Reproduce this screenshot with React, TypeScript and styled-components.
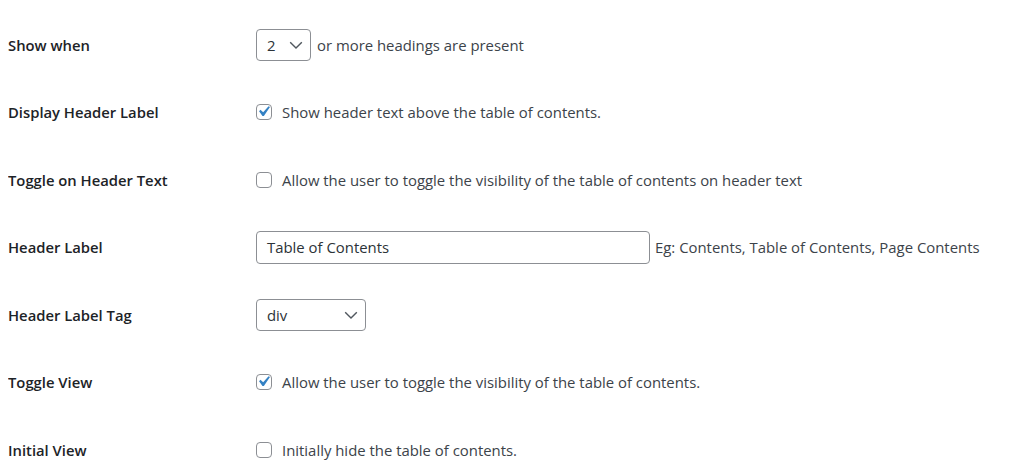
import React from "react";
import styled, { createGlobalStyle } from "styled-components";

const GlobalStyle = createGlobalStyle`
  body {
    margin: 8px;
    background: #fff;
    color: #3c434a;
    font-family: "Open Sans", "Noto Sans", "Liberation Sans", sans-serif;
    font-size: 14.9px;
  }
`;

const Table = styled.div`
  display: flex;
  flex-direction: column;
  padding-top: 3px;
`;

const Row = styled.div`
  display: grid;
  grid-template-columns: 248px 1fr;
  align-items: center;
  height: 67.5px;
`;

const Label = styled.div`
  color: #1d2327;
  font-weight: 600;
  font-size: 14.8px;
`;

const Field = styled.div<{ $gap?: number }>`
  display: flex;
  align-items: center;
  gap: ${({ $gap }) => $gap ?? 6}px;
  color: #3c434a;
  white-space: nowrap;
`;

const SelectBox = styled.div<{ $width: number }>`
  position: relative;
  box-sizing: border-box;
  width: ${({ $width }) => $width}px;
  height: 32px;
  border: 1px solid #8c8f94;
  border-radius: 4px;
  background: #fff;
  color: #2c3338;
  display: flex;
  align-items: center;
  padding: 0 24px 0 10px;

  svg {
    position: absolute;
    right: 7px;
    top: 50%;
    transform: translateY(-50%);
  }
`;

const TextInput = styled.div`
  box-sizing: border-box;
  width: 394px;
  height: 33px;
  border: 1px solid #8c8f94;
  border-radius: 4px;
  background: #fff;
  color: #2c3338;
  display: flex;
  align-items: center;
  padding: 0 10px;
`;

const Box = styled.span`
  position: relative;
  box-sizing: border-box;
  width: 16px;
  height: 16px;
  border: 1px solid #8c8f94;
  border-radius: 4px;
  background: #fff;
  flex: none;

  svg {
    position: absolute;
    left: -4px;
    top: -4px;
  }
`;

const Chevron = () => (
  <svg width="14" height="14" viewBox="0 0 14 14">
    <path d="M1.2 4.3l5.8 5.8 5.8-5.8" fill="none" stroke="#50575e" strokeWidth="1.4" />
  </svg>
);

const Checkbox = ({ checked }: { checked?: boolean }) => (
  <Box>
    {checked && (
      <svg width="21" height="21" viewBox="0 0 20 20">
        <path d="M14.83 4.89l1.34.94-5.81 8.38H9.02L5.78 9.67l1.34-1.25 2.57 2.4z" fill="#3582c4" />
      </svg>
    )}
  </Box>
);

const CheckField = ({ checked, text }: { checked?: boolean; text: string }) => (
  <Field $gap={10}>
    <Checkbox checked={checked} />
    <span>{text}</span>
  </Field>
);

export default function App() {
  return (
    <>
      <GlobalStyle />
      <Table>
        <Row>
          <Label>Show when</Label>
          <Field>
            <SelectBox $width={55}>
              2<Chevron />
            </SelectBox>
            <span>or more headings are present</span>
          </Field>
        </Row>
        <Row>
          <Label>Display Header Label</Label>
          <CheckField checked text="Show header text above the table of contents." />
        </Row>
        <Row>
          <Label>Toggle on Header Text</Label>
          <CheckField text="Allow the user to toggle the visibility of the table of contents on header text" />
        </Row>
        <Row>
          <Label>Header Label</Label>
          <Field $gap={5}>
            <TextInput>Table of Contents</TextInput>
            <span>Eg: Contents, Table of Contents, Page Contents</span>
          </Field>
        </Row>
        <Row>
          <Label>Header Label Tag</Label>
          <Field>
            <SelectBox $width={110}>
              div<Chevron />
            </SelectBox>
          </Field>
        </Row>
        <Row>
          <Label>Toggle View</Label>
          <CheckField checked text="Allow the user to toggle the visibility of the table of contents." />
        </Row>
        <Row>
          <Label>Initial View</Label>
          <CheckField text="Initially hide the table of contents." />
        </Row>
      </Table>
    </>
  );
}
